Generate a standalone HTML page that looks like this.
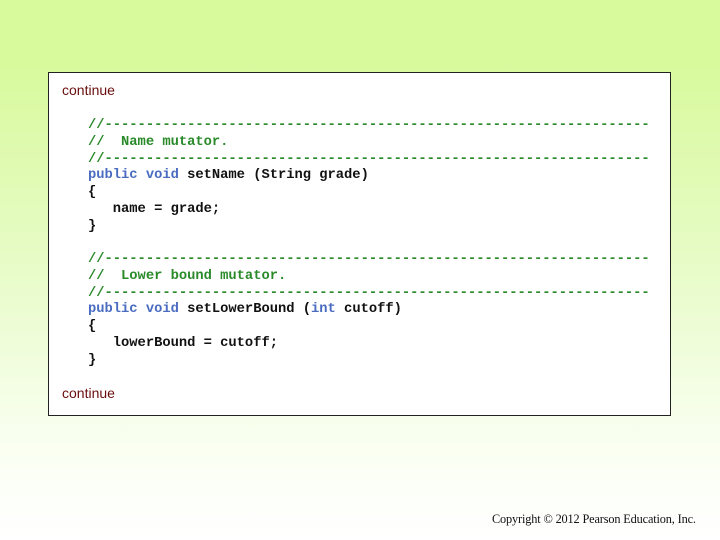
<!DOCTYPE html>
<html><head><style>
html,body{margin:0;padding:0}
body{width:720px;height:540px;position:relative;overflow:hidden;
background:linear-gradient(to bottom,#d8fa9c 0px,#d8fa9c 60px,#e6fbc4 250px,#fafff2 450px,#ffffff 540px);}
.box{position:absolute;left:48px;top:72px;width:621px;height:342px;border:1px solid #222;background:#fff;}
.cont{position:absolute;left:62px;font-family:"Liberation Sans",sans-serif;font-size:14px;color:#6b0d0d;}
pre{position:absolute;left:88px;top:118px;margin:0;font-family:"Liberation Mono",monospace;font-size:13.8px;line-height:16.75px;color:#111;font-weight:bold;letter-spacing:-0.02px}
.c{color:#2a8a2a}.k{color:#4a6cc0}
.copy{position:absolute;left:492px;top:512px;font-family:"Liberation Serif",serif;font-size:12.3px;color:#111;letter-spacing:-0.15px}
</style></head><body>
<div class="box"></div>
<div class="cont" style="top:82px">continue</div>
<pre><span class="c">//------------------------------------------------------------------
//  Name mutator.
//------------------------------------------------------------------</span>
<span class="k">public void</span> setName (String grade)
{
   name = grade;
}

<span class="c">//------------------------------------------------------------------
//  Lower bound mutator.
//------------------------------------------------------------------</span>
<span class="k">public void</span> setLowerBound (<span class="k">int</span> cutoff)
{
   lowerBound = cutoff;
}</pre>
<div class="cont" style="top:385px">continue</div>
<div class="copy">Copyright © 2012 Pearson Education, Inc.</div>
</body></html>
